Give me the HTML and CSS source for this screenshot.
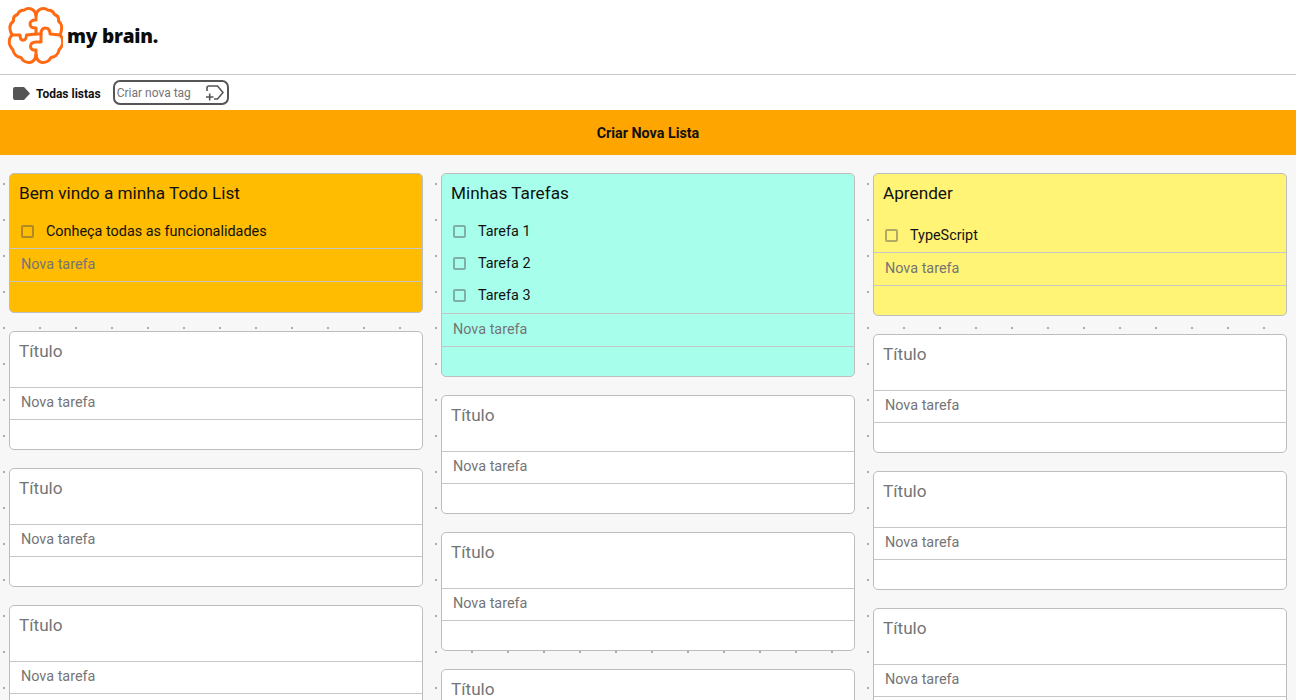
FILE: index.html
```html
<!doctype html>
<html>
  <head>
    <meta charset="utf-8">
    <link rel="stylesheet" href="styles.css">
  </head>
  <body>
    <header class="topbar">
      <svg class="brain" viewBox="7 6 56 59" fill="none" stroke="#ff6a13" stroke-width="3" stroke-linejoin="round" stroke-linecap="round">
        <path d="M36 15C35.500 11 32 8.500 28.500 8.500C26.500 8.500 25.500 9 24.500 10C21 10 18.500 12 17.500 14.500C14.500 15.500 13 18 13.500 21C11 23 9.500 26 10 29C10 31 11 33 12 35C10 37 9 41 9.500 44C10 46.500 11.500 48 13 50C13.500 54 17 57 21 57.500C22.500 60.500 26 63 30 62.500C33 62 35.500 59 36 55"/>
        <path d="M36 15C36.500 11 40 8.500 43.500 8.500C45.500 8.500 46.500 9 47.500 10C51 10 53.500 12 54.500 14.500C57.500 15.500 59 18 58.500 21C61 23 62 26 61.500 29C61.500 31 61 33 60 35C62 37 63 41 62.500 44C62 46.500 60.500 48 59 50C58.500 54 55 57 51 57.500C49.500 60.500 46 63 42 62.500C39 62 36.500 59 36 55"/>
        <path d="M36 15V20C32 19.500 30 22 30 24C30 26.500 32 28 36 28V34H41C41 30 43 28 45.500 28C48 28 50 30 50 34L60 35"/>
        <path d="M12 35H20C20 42 26 42 26.500 35L36 34"/>
        <path d="M41 34V42H36C32 42 30.500 44 30.500 46.500C30.500 49 33 50.500 36 50V55"/>
      </svg>
      <span class="brand">my brain.</span>
    </header>

    <nav class="tagbar">
      <svg class="tag-icon" viewBox="0 0 17 13"><path d="M2 0H11L17 6.500L11 13H2Q0 13 0 11V2Q0 0 2 0Z"/></svg>
      <span class="tag-all">Todas listas</span>
      <div class="tag-form">
        <span class="tag-placeholder">Criar nova tag</span>
        <svg class="tag-add" viewBox="0 0 18 16" fill="none" stroke="#555" stroke-width="1.600">
          <path d="M1 6V3Q1 1 3 1H11.500L17 7.500L11.500 14H8"/>
          <path d="M0 12H7.500M3.700 8.500V15.500"/>
        </svg>
      </div>
    </nav>

    <button class="create-list">Criar Nova Lista</button>

    <main class="board">
      <section class="column">
        <article class="card card-amber">
          <h2 class="card-title">Bem vindo a minha Todo List</h2>
          <ul class="tasks">
            <li class="task"><span class="check"></span>Conheça todas as funcionalidades</li>
          </ul>
          <div class="new-task">Nova tarefa</div>
          <div class="card-foot"></div>
        </article>
        <article class="card card-blank">
          <h2 class="card-title">Título</h2>
          <div class="new-task">Nova tarefa</div>
          <div class="card-foot"></div>
        </article>
        <article class="card card-blank">
          <h2 class="card-title">Título</h2>
          <div class="new-task">Nova tarefa</div>
          <div class="card-foot"></div>
        </article>
        <article class="card card-blank">
          <h2 class="card-title">Título</h2>
          <div class="new-task">Nova tarefa</div>
          <div class="card-foot"></div>
        </article>
      </section>

      <section class="column">
        <article class="card card-mint">
          <h2 class="card-title">Minhas Tarefas</h2>
          <ul class="tasks">
            <li class="task"><span class="check"></span>Tarefa 1</li>
            <li class="task"><span class="check"></span>Tarefa 2</li>
            <li class="task"><span class="check"></span>Tarefa 3</li>
          </ul>
          <div class="new-task">Nova tarefa</div>
          <div class="card-foot"></div>
        </article>
        <article class="card card-blank">
          <h2 class="card-title">Título</h2>
          <div class="new-task">Nova tarefa</div>
          <div class="card-foot"></div>
        </article>
        <article class="card card-blank">
          <h2 class="card-title">Título</h2>
          <div class="new-task">Nova tarefa</div>
          <div class="card-foot"></div>
        </article>
        <article class="card card-blank">
          <h2 class="card-title">Título</h2>
          <div class="new-task">Nova tarefa</div>
          <div class="card-foot"></div>
        </article>
      </section>

      <section class="column">
        <article class="card card-yellow">
          <h2 class="card-title">Aprender</h2>
          <ul class="tasks">
            <li class="task"><span class="check"></span>TypeScript</li>
          </ul>
          <div class="new-task">Nova tarefa</div>
          <div class="card-foot"></div>
        </article>
        <article class="card card-blank">
          <h2 class="card-title">Título</h2>
          <div class="new-task">Nova tarefa</div>
          <div class="card-foot"></div>
        </article>
        <article class="card card-blank">
          <h2 class="card-title">Título</h2>
          <div class="new-task">Nova tarefa</div>
          <div class="card-foot"></div>
        </article>
        <article class="card card-blank">
          <h2 class="card-title">Título</h2>
          <div class="new-task">Nova tarefa</div>
          <div class="card-foot"></div>
        </article>
      </section>
    </main>
  </body>
</html>
```

FILE: styles.css
```css
* {
  box-sizing: border-box;
}

html,
body {
  height: 100%;
  overflow: hidden;
}

body {
  margin: 0;
  font-family: Roboto, Arial, sans-serif;
  background-color: #fff;
  color: #111;
}

.topbar {
  display: flex;
  align-items: flex-start;
  height: 75px;
  padding: 6px 0 0 7px;
  border-bottom: 1px solid #c8c8c8;
}

.brain {
  width: 56px;
  height: 59px;
  flex-shrink: 0;
}

.brand {
  margin: 17px 0 0 4px;
  font-family: "Open Sans", sans-serif;
  font-size: 19px;
  font-weight: 800;
  letter-spacing: -0.2px;
  color: #0c0c0c;
}

.tagbar {
  display: flex;
  align-items: center;
  height: 35px;
  padding-left: 13px;
}

.tag-icon {
  width: 17px;
  height: 13px;
  margin-top: 2px;
  fill: #555;
}

.tag-all {
  margin: 2px 0 0 6px;
  font-size: 12px;
  font-weight: 700;
  color: #111;
}

.tag-form {
  display: flex;
  align-items: center;
  justify-content: space-between;
  width: 116px;
  height: 25px;
  margin-left: 12px;
  padding: 1px 3px 0 2px;
  border: 2px solid #555;
  border-radius: 7px;
}

.tag-placeholder {
  font-size: 12px;
  color: #757575;
}

.tag-add {
  width: 18px;
  height: 16px;
}

.create-list {
  display: block;
  width: 100%;
  height: 45px;
  padding: 0;
  border: none;
  background-color: #ffa500;
  font-family: Roboto, Arial, sans-serif;
  font-size: 14.300px;
  font-weight: 700;
  color: #111;
  box-shadow: 0 1px 1px rgba(0, 0, 0, 0.12);
}

.board {
  display: grid;
  grid-template-columns: repeat(3, 414px);
  gap: 18px;
  height: 545px;
  padding: 18px 9px 0;
  background-color: #f7f7f7;
  background-image: radial-gradient(circle at center, #aaa 0, #aaa 0.7px, transparent 1.200px);
  background-size: 36px 36px;
  background-position: -14px 11px;
}

.column {
  display: flex;
  flex-direction: column;
  gap: 18px;
}

.card {
  flex-shrink: 0;
  border: 1px solid #bdbdbd;
  border-radius: 5px;
  overflow: hidden;
}

.card-blank {
  background-color: #fff;
}

.card-amber {
  background-color: #ffbc00;
}

.card-mint {
  background-color: #a7ffeb;
}

.card-yellow {
  background-color: #fff475;
}

.card-title {
  height: 55px;
  margin: 0;
  padding: 8px 9px 0;
  font-size: 17.200px;
  font-weight: 400;
  line-height: 22px;
  color: #757575;
}

.card-amber .card-title {
  height: 40px;
  color: #111;
}

.card-mint .card-title {
  height: 41px;
  color: #111;
}

.card-yellow .card-title {
  height: 44px;
  color: #111;
}

.tasks {
  margin: 0;
  padding: 0;
  list-style: none;
}

.task {
  display: flex;
  align-items: center;
  height: 32px;
  padding-left: 11px;
  font-size: 14.400px;
  color: #111;
}

.task:last-child {
  height: 34px;
  padding-bottom: 2px;
}

.card-amber .task,
.card-yellow .task {
  padding-bottom: 0;
}

.check {
  width: 13px;
  height: 13px;
  margin-right: 12px;
  border: 2px solid rgba(80, 80, 80, 0.45);
  border-radius: 2px;
}

.new-task {
  display: flex;
  align-items: center;
  height: 34px;
  padding: 0 0 2px 11px;
  border-top: 1px solid #c6c6c6;
  border-bottom: 1px solid #c6c6c6;
  font-size: 14.400px;
  color: #757575;
}

.card-blank .new-task {
  height: 33px;
}

.card-foot {
  height: 29px;
}

.card-amber .card-foot {
  height: 30px;
}
```
